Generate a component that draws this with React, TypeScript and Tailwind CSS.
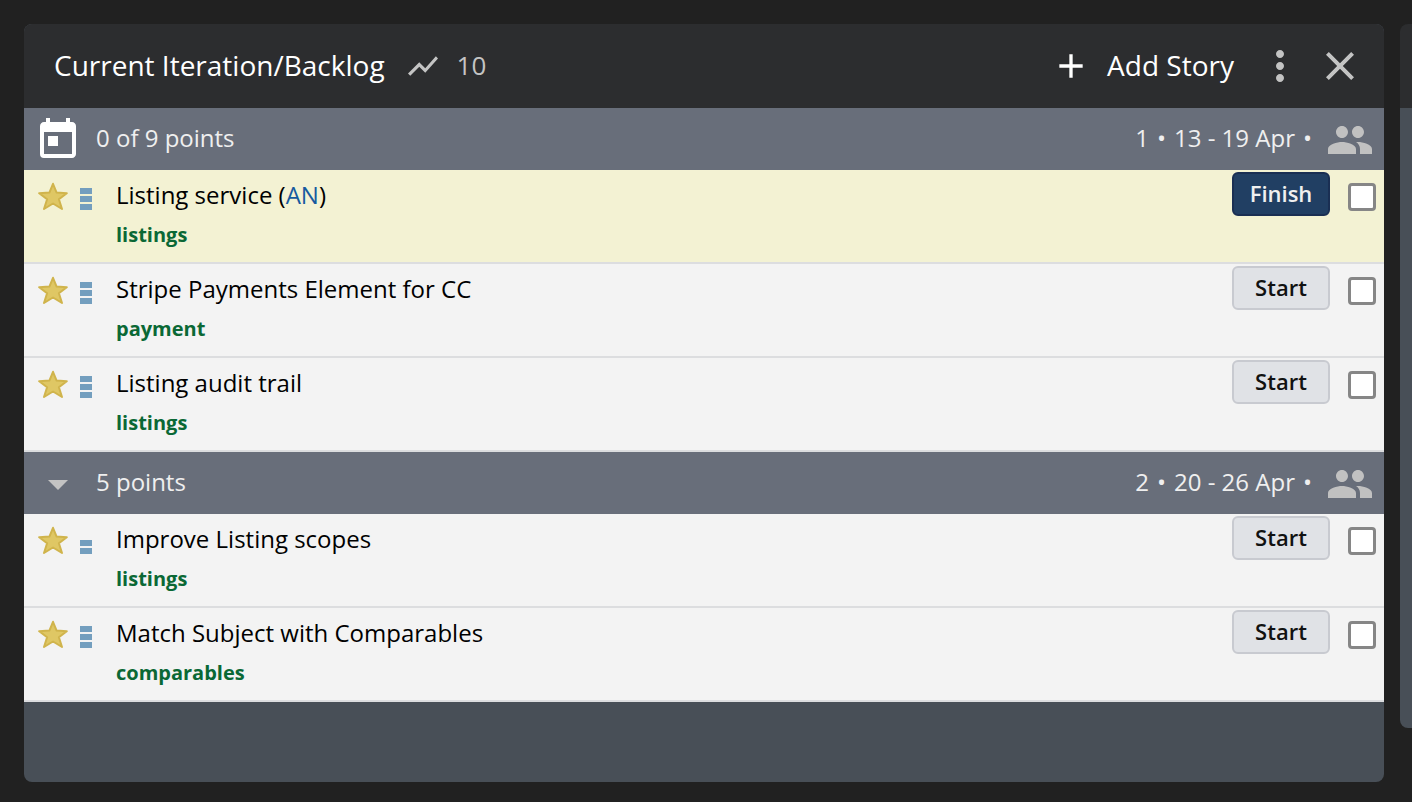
import { MdAdd, MdArrowDropDown, MdClose, MdMoreVert, MdPeople, MdShowChart, MdToday } from "react-icons/md";

type Story = {
  title: string;
  owner?: string;
  label: string;
  points: number;
  started?: boolean;
};

type Iteration = {
  number: number;
  summary: string;
  dates: string;
  current?: boolean;
  stories: Story[];
};

const iterations: Iteration[] = [
  {
    number: 1,
    summary: "0 of 9 points",
    dates: "13 - 19 Apr",
    current: true,
    stories: [
      { title: "Listing service", owner: "AN", label: "listings", points: 3, started: true },
      { title: "Stripe Payments Element for CC", label: "payment", points: 3 },
      { title: "Listing audit trail", label: "listings", points: 3 },
    ],
  },
  {
    number: 2,
    summary: "5 points",
    dates: "20 - 26 Apr",
    stories: [
      { title: "Improve Listing scopes", label: "listings", points: 2 },
      { title: "Match Subject with Comparables", label: "comparables", points: 3 },
    ],
  },
];

function Star() {
  return (
    <svg className="mt-3 h-7 w-[30px] shrink-0" viewBox="0 0 30 28" aria-hidden="true">
      <path
        d="M15 1.8 18.6 10.6 28.8 11.2 20.9 17.2 24 27 15 21.5 6 27 9.1 17.2 1.2 11.2 11.4 10.6Z"
        fill="#dfc764"
        stroke="#d0b44c"
        strokeWidth="2"
        strokeLinejoin="round"
      />
    </svg>
  );
}

function Estimate({ points }: { points: number }) {
  return (
    <div className="flex h-10 w-3 shrink-0 flex-col justify-end gap-0.5">
      {Array.from({ length: points }, (_, i) => (
        <span key={i} className="h-1.5 bg-[#739ebe]" />
      ))}
    </div>
  );
}

function StoryRow({ story }: { story: Story }) {
  return (
    <li
      className={`flex items-start border-b-2 border-[#dcdddf] pr-2 pl-3.5 ${
        story.started ? "bg-[#f3f2d3]" : "bg-[#f3f3f3]"
      }`}
    >
      <Star />
      <div className="ml-3">
        <Estimate points={story.points} />
      </div>
      <div className="ml-6 min-w-0 flex-1 pt-1.5 pb-1.5">
        <div className="text-2xl leading-[38px] text-black">
          {story.title}
          {story.owner && (
            <>
              {" ("}
              <a href="#owner" className="text-[#165a9f]">
                {story.owner}
              </a>
              {")"}
            </>
          )}
        </div>
        <a href="#label" className="block w-fit text-xl leading-[42px] font-bold text-[#0a6835]">
          {story.label}
        </a>
      </div>
      <button
        type="button"
        className={`mt-0.5 flex h-11 w-[98px] items-center justify-center rounded-md border-2 pb-0.5 text-[22px] leading-7 font-semibold ${
          story.started
            ? "border-[#1a2f53] bg-[#213f63] text-[#f0f0f0]"
            : "border-[#c8cad0] bg-[#e0e2e6] text-[#111111]"
        }`}
      >
        {story.started ? "Finish" : "Start"}
      </button>
      <input
        type="checkbox"
        aria-label={`Select ${story.title}`}
        className="mt-[13px] ml-[18px] size-7 shrink-0 appearance-none rounded-sm border-3 border-[#868686] bg-white checked:bg-[#213f63]"
      />
    </li>
  );
}

function IterationSection({ iteration }: { iteration: Iteration }) {
  return (
    <section>
      <div className="flex items-center bg-[#686e7a] px-2.5 pt-2 pb-1.5 text-2xl leading-8 text-[#efefef]">
        {iteration.current ? (
          <MdToday className="size-12 shrink-0 text-white" />
        ) : (
          <button type="button" aria-label="Collapse iteration" className="text-[#c3c3c3]">
            <MdArrowDropDown className="size-12" />
          </button>
        )}
        <h2 className="ml-3.5 flex-1 pb-1">{iteration.summary}</h2>
        <div className="mr-3.5 flex gap-2 pb-1">
          <span>{iteration.number}</span>
          <span>•</span>
          <span>{iteration.dates}</span>
          <span>•</span>
        </div>
        <button type="button" aria-label="Team strength" className="text-[#c1c1c1]">
          <MdPeople className="size-12" />
        </button>
      </div>
      <ul>
        {iteration.stories.map((story) => (
          <StoryRow key={story.title} story={story} />
        ))}
      </ul>
    </section>
  );
}

export default function App() {
  return (
    <div className="flex min-h-screen items-start gap-4 overflow-hidden bg-[#212121] pt-6 pl-6 font-['Open_Sans',sans-serif]">
      <main className="min-w-0 flex-1 overflow-hidden rounded-lg bg-[#484f57] pb-20">
        <header className="flex h-21 items-center bg-[#2c2d2f] pr-5 pl-7.5 text-white">
          <h1 className="pb-0.5 text-[28px] leading-10">Current Iteration/Backlog</h1>
          <button type="button" className="ml-5 flex items-center gap-4 text-[26px] leading-8 text-[#c4c4c4]">
            <MdShowChart className="size-9" />
            <span className="pb-0.5">10</span>
          </button>
          <div className="ml-auto flex items-center">
            <button type="button" className="flex items-center gap-4 text-[28px] leading-10">
              <MdAdd className="size-10" />
              <span className="pb-0.5">Add Story</span>
            </button>
            <button type="button" aria-label="Panel actions" className="ml-[22px] text-[#c3c3c3]">
              <MdMoreVert className="size-12" />
            </button>
            <button type="button" aria-label="Close panel" className="ml-3 text-[#c3c3c3]">
              <MdClose className="size-12" />
            </button>
          </div>
        </header>
        {iterations.map((iteration) => (
          <IterationSection key={iteration.number} iteration={iteration} />
        ))}
      </main>
      <aside className="w-3 shrink-0 overflow-hidden rounded-l-lg">
        <div className="h-21 bg-[#2c2d2f]" />
        <div className="h-[620px] bg-[#484f57]" />
      </aside>
    </div>
  );
}
